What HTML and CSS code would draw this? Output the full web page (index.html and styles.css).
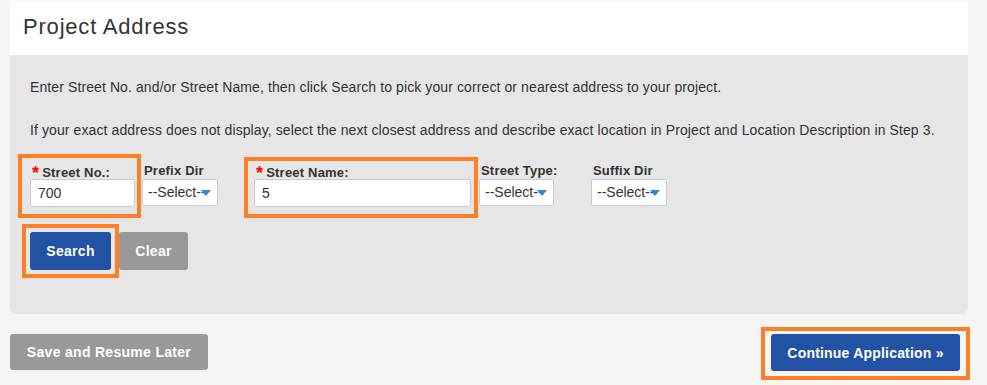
FILE: index.html
```html
<!DOCTYPE html>
<html>
<head>
<meta charset="utf-8">
<link rel="stylesheet" href="styles.css">
</head>
<body>
<div class="page">
  <div class="card">
    <div class="card-header"><h1>Project Address</h1></div>
    <div class="card-body">
      <p>Enter Street No. and/or Street Name, then click Search to pick your correct or nearest address to your project.</p>
      <p>If your exact address does not display, select the next closest address and describe exact location in Project and Location Description in Step 3.</p>
      <div class="fields">
        <div class="field f-no">
          <label><span class="req">*</span>Street No.:</label>
          <div class="input">700</div>
        </div>
        <div class="field f-prefix">
          <label>Prefix Dir</label>
          <div class="select"><span>--Select--</span><svg class="caret" width="10" height="6" viewBox="0 0 10 6"><path d="M0 0H10L5 6Z" fill="#1e8fdc"/></svg></div>
        </div>
        <div class="field f-name">
          <label><span class="req">*</span>Street Name:</label>
          <div class="input">5</div>
        </div>
        <div class="field f-type">
          <label>Street Type:</label>
          <div class="select"><span>--Select--</span><svg class="caret" width="10" height="6" viewBox="0 0 10 6"><path d="M0 0H10L5 6Z" fill="#1e8fdc"/></svg></div>
        </div>
        <div class="field f-suffix">
          <label>Suffix Dir</label>
          <div class="select"><span>--Select--</span><svg class="caret" width="10" height="6" viewBox="0 0 10 6"><path d="M0 0H10L5 6Z" fill="#1e8fdc"/></svg></div>
        </div>
      </div>
      <div class="actions">
        <button class="btn btn-blue btn-search">Search</button>
        <button class="btn btn-gray btn-clear">Clear</button>
      </div>
    </div>
  </div>
  <div class="footer">
    <button class="btn btn-gray btn-save">Save and Resume Later</button>
    <button class="btn btn-blue btn-continue">Continue Application &raquo;</button>
  </div>
  <div class="mark m-no"></div>
  <div class="mark m-name"></div>
  <div class="mark m-search"></div>
  <div class="mark m-continue"></div>
</div>
</body>
</html>
```
FILE: styles.css
```css
html, body {
  margin: 0;
  padding: 0;
  background: #f5f5f5;
}
body {
  font-family: "Liberation Sans", Arial, sans-serif;
  color: #333;
}
.page {
  position: relative;
  width: 958px;
  padding: 1px 19px 0 10px;
  height: 384px;
}
.card-header {
  background: #fff;
  height: 54px;
  padding-left: 13px;
  display: flex;
  align-items: center;
}
.card-header h1 {
  margin: 0;
  font-size: 22px;
  letter-spacing: 0.8px;
  font-weight: normal;
  color: #333;
  position: relative;
  top: -1px;
}
.card-body {
  background: #e6e6e6;
  border-radius: 0 0 6px 6px;
  padding: 23px 20px 44px 20px;
}
.card-body p {
  margin: 0 0 25px 0;
  font-size: 14px;
  letter-spacing: 0.1px;
  line-height: 18px;
}
.card-body p + p {
  margin-bottom: 24px;
}
.fields {
  display: flex;
  align-items: flex-start;
}
.field {
  display: flex;
  flex-direction: column;
  flex: none;
}
.field label {
  font-size: 13px;
  font-weight: bold;
  line-height: 16px;
  height: 16px;
  color: #333;
  white-space: nowrap;
  letter-spacing: 0.2px;
}
.req {
  color: #f00;
  font-size: 18px;
  margin-right: 3px;
  margin-left: 2px;
  position: relative;
  top: 2px;
}
.input {
  box-sizing: border-box;
  width: 100%;
  height: 28px;
  background: #fff;
  border: 1px solid #ccc;
  border-radius: 2px;
  font-size: 14px;
  line-height: 26px;
  padding-left: 7px;
}
.select {
  position: relative;
  box-sizing: border-box;
  width: 100%;
  height: 27px;
  background: #fff;
  border: 1px solid #ccc;
  border-radius: 2px;
  font-size: 14px;
  line-height: 25px;
  padding-left: 5px;
  overflow: hidden;
  white-space: nowrap;
  color: #333;
}
.caret {
  position: absolute;
  right: 6px;
  top: 10px;
}
.f-no { width: 105px; }
.f-prefix { width: 76px; margin-left: 7px; }
.f-prefix label { padding-left: 2px; }
.f-name { width: 217px; margin-left: 36px; }
.f-type { width: 75px; margin-left: 8px; }
.f-type label { padding-left: 2px; }
.f-suffix { width: 76px; margin-left: 37px; }
.f-suffix label { padding-left: 2px; }
.actions {
  display: flex;
  gap: 8px;
  margin-top: 25px;
}
.btn {
  border: 0;
  border-radius: 3px;
  color: #fff;
  font-family: "Liberation Sans", Arial, sans-serif;
  font-weight: bold;
  font-size: 14px;
  padding: 0;
  cursor: pointer;
  letter-spacing: 0.3px;
}
.btn-blue { background: #2152a3; }
.btn-gray { background: #999; }
.btn-search { width: 81px; height: 38px; }
.btn-clear { width: 69px; height: 38px; }
.footer {
  display: flex;
  justify-content: space-between;
  align-items: flex-start;
  margin-top: 20px;
  padding-right: 8px;
}
.btn-save { width: 198px; height: 36px; }
.btn-continue { width: 189px; height: 37px; letter-spacing: 0.2px; }
.mark {
  position: absolute;
  box-sizing: border-box;
  border: 4px solid #ff7f27;
}
.m-no { left: 18px; top: 154px; width: 123px; height: 64px; }
.m-name { left: 244px; top: 157px; width: 234px; height: 61px; }
.m-search { left: 22px; top: 224px; width: 97px; height: 54px; }
.m-continue { left: 761px; top: 327px; width: 209px; height: 53px; }
```
